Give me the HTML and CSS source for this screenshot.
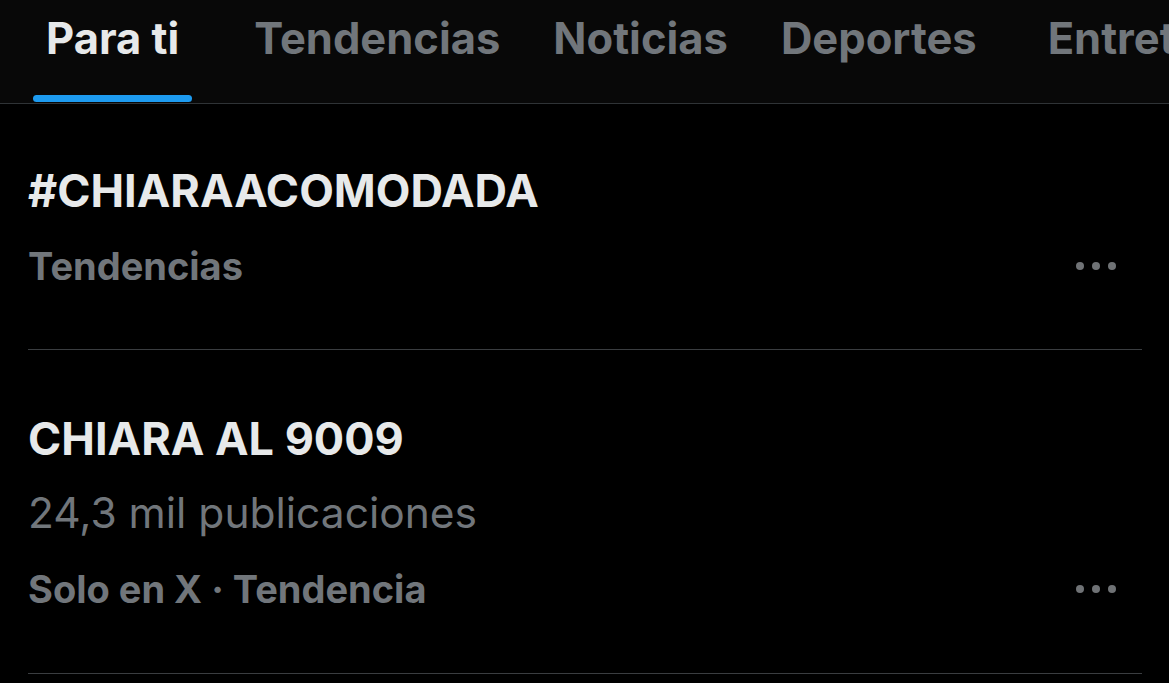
FILE: index.html
```html
<!DOCTYPE html>
<html lang="es">
<head>
  <meta charset="UTF-8" />
  <title>Explorar</title>
  <link rel="stylesheet" href="styles.css">
</head>
<body>

<header class="tabs">
  <a href="#" class="tab active">Para ti<span class="bar"></span></a>
  <a href="#" class="tab">Tendencias</a>
  <a href="#" class="tab">Noticias</a>
  <a href="#" class="tab tab-wide">Deportes</a>
  <a href="#" class="tab">Entretenimiento</a>
</header>

<main class="trends">
  <!-- tendencia 1 -->
  <div class="trend first">
    <div class="title">#CHIARAACOMODADA</div>
    <div class="meta">
      <span>Tendencias</span>
      <svg class="more" width="40" height="10" viewBox="0 0 40 10"><circle cx="4" cy="5" r="4"/><circle cx="20" cy="5" r="4"/><circle cx="36" cy="5" r="4"/></svg>
    </div>
  </div>

  <!-- tendencia 2 -->
  <div class="trend second">
    <div class="title">CHIARA AL 9009</div>
    <div class="count">24,3 mil publicaciones</div>
    <div class="meta">
      <span>Solo en X · Tendencia</span>
      <svg class="more" width="40" height="10" viewBox="0 0 40 10"><circle cx="4" cy="5" r="4"/><circle cx="20" cy="5" r="4"/><circle cx="36" cy="5" r="4"/></svg>
    </div>
  </div>
</main>

</body>
</html>
```

FILE: styles.css
```css
body { margin: 0; background: #000; font-family: Inter, "Liberation Sans", sans-serif; color: #e7e9ea; overflow: hidden; }
a { text-decoration: none; }

.tabs { display: flex; height: 103px; padding-left: 19.5px; background: #080808; border-bottom: 1px solid #2f3336; white-space: nowrap; overflow: hidden; }
.tab { position: relative; padding: 0 26.5px; font-size: 43.5px; font-weight: 700; line-height: 76px; color: #71767b; }
.tab.active { color: #e7e9ea; margin-right: 22px; }
.tab-wide { margin-right: 18px; }
.bar { position: absolute; left: 13.5px; right: 13.5px; bottom: 1px; height: 7px; border-radius: 4px; background: #1d9bf0; }

.trends { padding: 0 27px 0 28px; }
.trend { border-bottom: 1px solid #3a3d40; padding: 61px 0 60px; }
.trend.first { padding-bottom: 59px; }
.trend.second { padding-top: 63px; }
.title { font-size: 45px; font-weight: 700; line-height: 52px; }
.count { font-size: 42.5px; line-height: 52px; color: #71767b; margin-top: 22px; }
.meta { display: flex; justify-content: space-between; align-items: center; font-size: 38px; font-weight: 700; line-height: 48px; color: #71767b; margin-top: 25px; }
.count + .meta { margin-top: 26px; }
.more { fill: #6f7275; margin-right: 26px; }
```
